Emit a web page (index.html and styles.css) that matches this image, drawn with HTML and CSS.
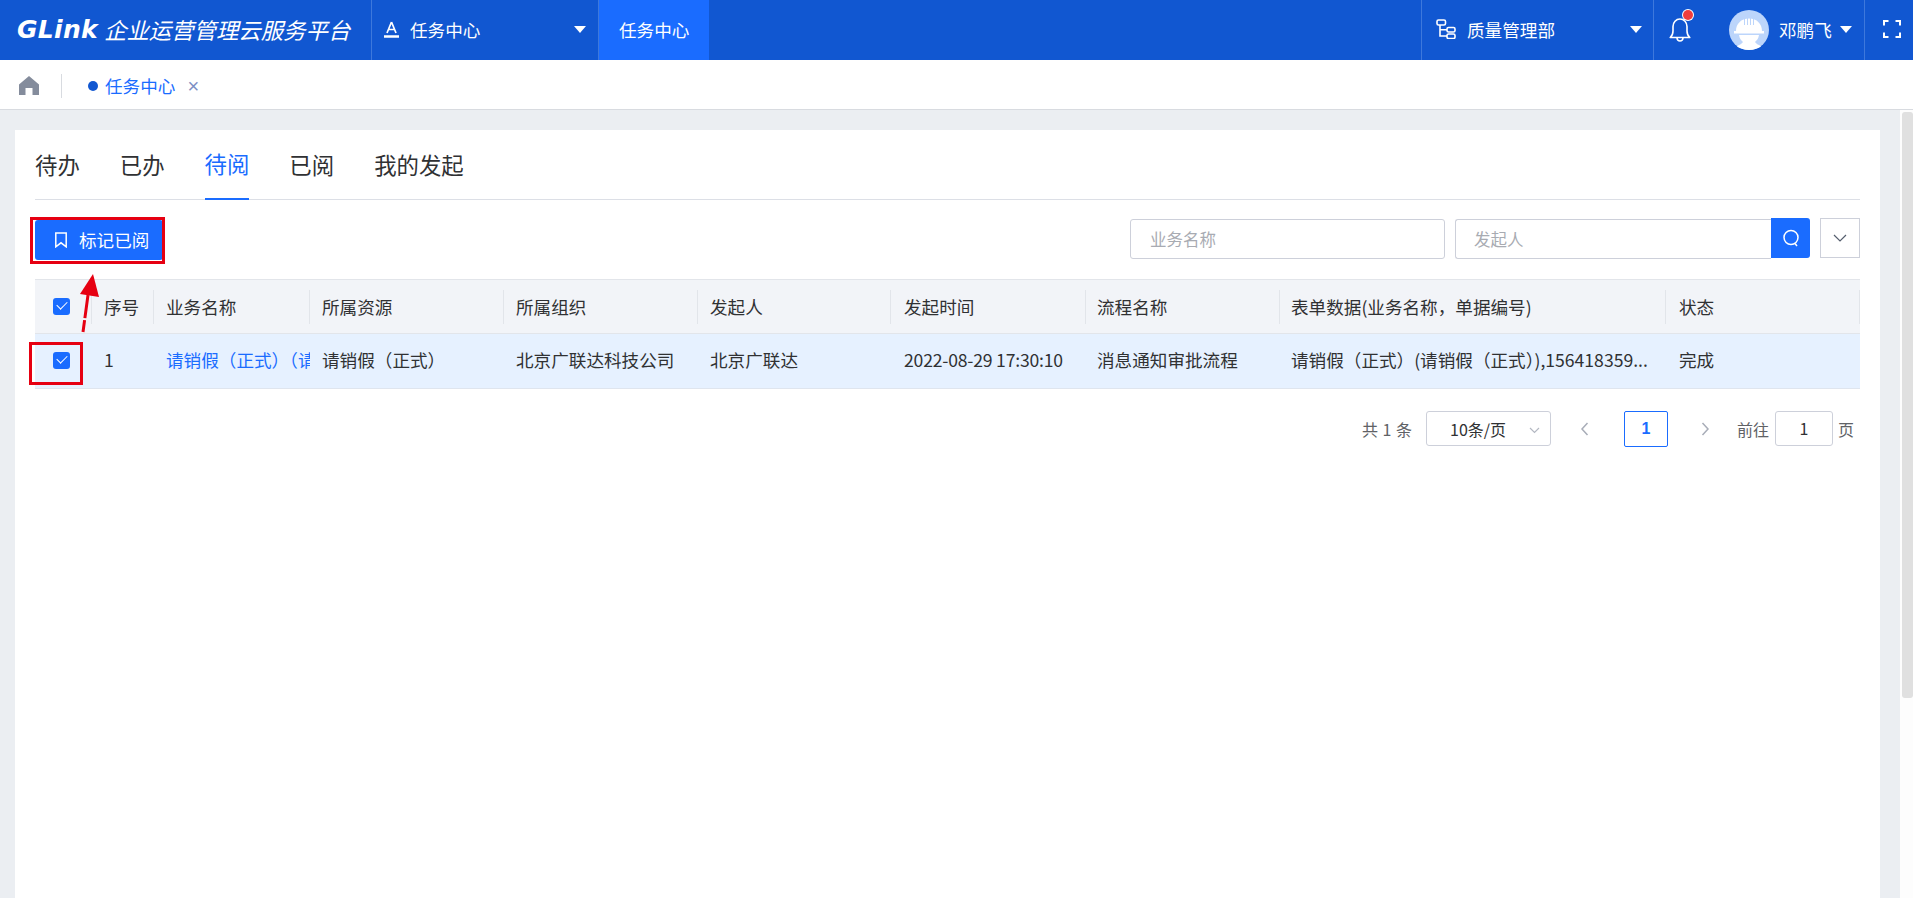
FILE: index.html
```html
<!DOCTYPE html>
<html lang="zh-CN">
<head>
<meta charset="utf-8">
<title>任务中心</title>
<link rel="stylesheet" href="styles.css">
</head>
<body>
<div class="app">
  <header class="topbar">
    <div class="brand"><span class="brand-mark">GLink</span><span class="brand-name">企业运营管理云服务平台</span></div>
    <div class="nav-select">
      <svg class="i-a" width="15" height="17" viewBox="0 0 15 17"><path d="M7.500 1 3 12M7.500 1 12 12M4.500 8.500h6" fill="none" stroke="#fff" stroke-width="1.700"/><path d="M0 15.500h15" stroke="#fff" stroke-width="2.500"/></svg>
      <span class="nav-label">任务中心</span>
      <i class="caret"></i>
    </div>
    <div class="nav-active">任务中心</div>
    <div class="spacer"></div>
    <div class="org">
      <svg width="20" height="20" viewBox="0 0 20 20" fill="none" stroke="#fff" stroke-width="1.600"><rect x="1" y="1" width="8.500" height="5" rx="1.500"/><rect x="11" y="8.500" width="8" height="4.500" rx="1.500"/><rect x="11" y="15" width="8" height="4.500" rx="1.500"/><path d="M4 6v11h7M4 10.700h7"/></svg>
      <span class="org-label">质量管理部</span>
      <i class="caret"></i>
    </div>
    <div class="bell">
      <svg class="bell-icon" width="22" height="24" viewBox="0 3 22 24" fill="none" stroke="#fff" stroke-width="1.600"><path d="M1.200 22.500c2-1.600 2.800-3.600 2.800-6.500v-4.500C4 7.300 7 4 11 4s7 3.300 7 7.500V16c0 2.900.8 4.900 2.800 6.500z" stroke-linejoin="round"/><path d="M8 23c.2 2 1.400 3 3 3s2.800-1 3-3"/></svg>
      <i class="dot"></i>
    </div>
    <div class="user">
      <svg class="avatar" width="40" height="40" viewBox="0 0 40 40"><circle cx="20" cy="20" r="20" fill="#bcd5fb"/><path d="M7 21c0-7 5-12.500 13-12.500S33 14 33 21h2v2.500H5V21z" fill="#fff"/><path d="M10 25h20c-.5 4-3 6-4 7 1.500 2.500 5 3 6 4.500C28.500 38.800 24.500 40 20 40s-8.500-1.200-12-3.500c1-1.500 4.500-2 6-4.500-1-1-3.500-3-4-7z" fill="#fff"/><path d="M15.500 9v6M18.500 8v7M21.500 8v7M24.500 9v6" stroke="#bcd5fb" stroke-width="1"/></svg>
      <span class="user-name">邓鹏飞</span>
      <i class="caret"></i>
    </div>
    <div class="fullscreen">
      <svg width="18" height="18" viewBox="0 0 18 18" fill="none" stroke="#fff" stroke-width="2"><path d="M1 5.500V1h4.500M12.500 1H17v4.500M17 12.500V17h-4.500M5.500 17H1v-4.500"/></svg>
    </div>
  </header>

  <nav class="tagbar">
    <svg class="home" width="20" height="19" viewBox="0 0 20 19"><path d="M10 0 20 8.500V19h-6.500v-7h-7v7H0V8.500z" fill="#848c9c"/></svg>
    <span class="tag-sep"></span>
    <div class="tag"><i class="tag-dot"></i><span class="tag-label">任务中心</span><span class="tag-close">×</span></div>
  </nav>

  <div class="main">
    <section class="card">
      <div class="tabs">
        <span class="tab">待办</span>
        <span class="tab">已办</span>
        <span class="tab tab-on">待阅</span>
        <span class="tab">已阅</span>
        <span class="tab">我的发起</span>
      </div>

      <div class="toolbar">
        <button class="mark-btn">
          <svg width="14" height="16" viewBox="0 0 14 16" fill="none" stroke="#fff" stroke-width="1.500"><path d="M1.800 1h10.400v13.800L7 10.800l-5.200 4z"/></svg>
          <span class="mark-label">标记已阅</span>
        </button>
        <div class="search">
          <div class="field field-a">业务名称</div>
          <div class="field-group">
            <div class="field field-b">发起人</div>
            <div class="search-btn"><svg width="18" height="19" viewBox="0 0 18 19" fill="none" stroke="#fff" stroke-width="1.500"><circle cx="9" cy="8.500" r="7"/><path d="M13 14.500l2 2.500"/></svg></div>
          </div>
          <div class="more"><svg width="14" height="8" viewBox="0 0 14 8" fill="none" stroke="#555e6e" stroke-width="1.200"><path d="M1 1l6 6 6-6"/></svg></div>
        </div>
      </div>

      <div class="table">
        <div class="row head">
          <div class="cell c-check"><i class="check"></i></div>
          <div class="cell c-no"><span>序号</span></div>
          <div class="cell c-biz"><span>业务名称</span></div>
          <div class="cell c-res"><span>所属资源</span></div>
          <div class="cell c-org"><span>所属组织</span></div>
          <div class="cell c-user"><span>发起人</span></div>
          <div class="cell c-time"><span>发起时间</span></div>
          <div class="cell c-flow"><span>流程名称</span></div>
          <div class="cell c-form"><span>表单数据(业务名称，单据编号)</span></div>
          <div class="cell c-state"><span>状态</span></div>
        </div>
        <div class="row body">
          <div class="cell c-check"><i class="check"></i></div>
          <div class="cell c-no"><span>1</span></div>
          <div class="cell c-biz"><span class="link">请销假（正式）（请销假（正式））</span></div>
          <div class="cell c-res"><span>请销假（正式）</span></div>
          <div class="cell c-org"><span>北京广联达科技公司</span></div>
          <div class="cell c-user"><span>北京广联达</span></div>
          <div class="cell c-time"><span class="date">2022-08-29 17:30:10</span></div>
          <div class="cell c-flow"><span>消息通知审批流程</span></div>
          <div class="cell c-form"><span>请销假（正式）(请销假（正式）),156418359...</span></div>
          <div class="cell c-state"><span>完成</span></div>
        </div>
      </div>

      <div class="pager">
        <span class="total">共 1 条</span>
        <div class="size">10条/页<svg width="11" height="7" viewBox="0 0 11 7" fill="none" stroke="#b4b8c2" stroke-width="1.200"><path d="M1 1l4.500 4.500L10 1"/></svg></div>
        <svg class="pg-arrow pg-prev" width="9" height="14" viewBox="0 0 9 14" fill="none" stroke="#a8adb8" stroke-width="1.500"><path d="M7.500 1 2 7l5.500 6"/></svg>
        <span class="page-on">1</span>
        <svg class="pg-arrow pg-next" width="9" height="14" viewBox="0 0 9 14" fill="none" stroke="#a8adb8" stroke-width="1.500"><path d="M1.500 1 7 7l-5.500 6"/></svg>
        <span class="goto">前往</span>
        <span class="page-input">1</span>
        <span class="goto-end">页</span>
      </div>
    </section>
    <div class="scrollbar"><div class="thumb"></div></div>
  </div>
</div>

<div class="mark mark-btnbox"></div>
<div class="mark mark-checkbox"></div>
<svg class="mark-arrow" width="24" height="62" viewBox="0 0 24 62"><path d="M3 60 8 23" stroke="#e60012" stroke-width="3" stroke-dasharray="12 2 30" fill="none"/><path d="M13 2 19 25 0 22z" fill="#e60012"/></svg>
</body>
</html>
```
FILE: styles.css
```css
* { box-sizing: border-box; }
html, body { margin: 0; padding: 0; height: 100%; overflow: hidden; }
body {
  font-family: "Noto Sans CJK SC", "Liberation Sans", sans-serif;
  font-size: 17.6px;
  color: #303133;
  background: #ebeef2;
}
i { display: block; font-style: normal; }
.app { height: 898px; display: flex; flex-direction: column; }

.topbar { height: 60px; background: #1157d1; color: #fff; display: flex; align-items: stretch; flex: none; }
.topbar > div { display: flex; align-items: center; padding-bottom: 2px; }
.caret { width: 0; height: 0; border-left: 6px solid transparent; border-right: 6px solid transparent; border-top: 7px solid #fff; }
.brand { width: 371px; padding-left: 17px; }
.brand-mark { font-family: "DejaVu Sans", sans-serif; font-weight: 700; font-style: italic; font-size: 25px; letter-spacing: 0.3px; width: 87px; line-height: 1; }
.brand-name { font-size: 22.4px; font-style: italic; white-space: nowrap; }
.nav-select { width: 227px; border-left: 1px solid #3d78dc; padding-left: 12px; }
.nav-label { margin-left: 11px; width: 164px; }
.nav-active { width: 111px; background: #1a6cff; border-left: 1px solid #3d78dc; padding-left: 20px; }
.spacer { flex: 1; }
.org { width: 232px; border-left: 1px solid #3d78dc; padding-left: 14px; }
.org-label { margin-left: 11px; width: 163px; }
.bell { width: 76px; border-left: 1px solid #3d78dc; padding-left: 15px; position: relative; }
.bell-icon { margin-top: 2px; }
.dot { position: absolute; left: 29px; top: 10px; width: 10px; height: 10px; border-radius: 50%; background: #f03d3d; box-shadow: 0 0 0 1px #fff; }
.user { width: 135px; }
.avatar { margin-top: 2px; }
.user-name { margin-left: 10px; width: 61px; white-space: nowrap; }
.fullscreen { width: 49px; border-left: 1px solid #3d78dc; padding-left: 18px; }

.tagbar { height: 50px; background: #fff; border-bottom: 1px solid #d8dbe0; display: flex; align-items: center; padding-left: 19px; flex: none; }
.home { margin-top: 2px; }
.tag-sep { width: 1px; height: 24px; background: #d8dbe0; margin-left: 22px; margin-top: 2px; }
.tag { display: flex; align-items: center; margin-left: 26px; color: #1a6cff; margin-top: 2px; }
.tag-dot { width: 10px; height: 10px; border-radius: 50%; background: #1157d1; }
.tag-label { margin-left: 7px; }
.tag-close { margin-left: 12px; color: #7d8fc4; font-size: 20px; line-height: 1; font-family: "Liberation Sans", sans-serif; }

.main { flex: 1; display: flex; min-height: 0; padding: 20px 0 0 15px; }
.card { width: 1865px; background: #fff; padding: 0 20px; }
.scrollbar { width: 13px; margin-left: 20px; margin-top: -20px; background: #fdfdfd; padding: 2px 0 0 2px; }
.thumb { height: 586px; background: #e0e0e0; border-radius: 3px; }

.tabs { height: 70px; border-bottom: 1px solid #dcdfe6; display: flex; align-items: stretch; }
.tab { font-size: 22.4px; display: flex; align-items: center; margin-right: 40px; height: 70px; padding-bottom: 2px; white-space: nowrap; }
.tab-on { color: #1a6cff; border-bottom: 2px solid #1a6cff; }

.toolbar { display: flex; justify-content: space-between; align-items: flex-start; padding-top: 18px; height: 79px; }
.mark-btn { width: 128px; height: 40px; margin-top: 2px; background: #1a6cff; color: #fff; border: 0; border-radius: 3px; font: inherit; display: flex; align-items: center; padding: 0 0 0 19px; gap: 11px; }
.mark-label { margin-top: -2px; }
.search { display: flex; gap: 10px; }
.field { height: 40px; margin-top: 1px; border: 1px solid #cdd0da; border-radius: 3px; color: #a8abb2; font-size: 16.5px; line-height: 38px; padding-left: 18px; background: #fff; }
.field-a { width: 315px; padding-left: 19px; }
.field-group { display: flex; }
.field-b { width: 316px; border-right: 0; border-radius: 3px 0 0 3px; }
.search-btn { width: 39px; height: 40px; background: #1a6cff; border-radius: 0 3px 3px 0; display: flex; align-items: center; justify-content: center; }
.more { width: 40px; height: 40px; border: 1px solid #cdd0da; display: flex; align-items: center; justify-content: center; }

.table { border-top: 1px solid #e2e5ea; }
.row { display: flex; width: 1825px; }
.head { height: 54px; background: #f2f4f8; border-bottom: 1px solid #e2e5ea; }
.body { height: 55px; background: #e6f1ff; border-bottom: 1px solid #dfe5ee; }
.cell { display: flex; align-items: center; padding-left: 12px; position: relative; white-space: nowrap; overflow: hidden; }
.body .cell { padding-bottom: 4px; }
.head .cell::after { content: ""; position: absolute; right: 0; top: 10px; bottom: 9px; width: 1px; background: #e2e5ea; }
.c-check { width: 57px; padding-left: 18px; }
.c-no { width: 62px; }
.c-biz { width: 156px; }
.c-res { width: 194px; }
.c-org { width: 194px; }
.c-user { width: 193px; }
.c-time { width: 195px; padding-left: 13px; }
.c-flow { width: 194px; padding-left: 11px; }
.c-form { width: 386px; padding-left: 11px; }
.c-state { width: 194px; padding-left: 13px; }
.link { color: #1a6cff; }
.date { letter-spacing: -0.2px; }
.check { width: 17px; height: 17px; border-radius: 3px; background: #1a6cff; position: relative; }
.body .check { margin-top: 2px; }
.check::after { content: ""; position: absolute; left: 4px; top: 3px; width: 9px; height: 5px; border-left: 1.500px solid #fff; border-bottom: 1.500px solid #fff; transform: rotate(-45deg); }

.pager { display: flex; align-items: center; height: 35px; margin-top: 22px; padding-left: 1327px; font-size: 16px; color: #606266; white-space: nowrap; }
.total { width: 64px; word-spacing: 1px; }
.size { width: 125px; height: 35px; border: 1px solid #cdd0da; border-radius: 3px; color: #303133; padding-left: 23px; display: flex; align-items: center; position: relative; }
.size svg { position: absolute; right: 10px; top: 15px; }
.pg-arrow { flex: none; }
.pg-prev { margin-left: 29px; }
.page-on { width: 44px; height: 36px; border: 1px solid #1a6cff; border-radius: 2px; color: #1a6cff; font-weight: 700; font-family: "Liberation Sans", sans-serif; text-align: center; line-height: 34px; margin-left: 35px; }
.pg-next { margin-left: 33px; }
.goto { margin-left: 27px; width: 38px; }
.page-input { width: 58px; height: 35px; border: 1px solid #cdd0da; border-radius: 3px; color: #303133; text-align: center; line-height: 33px; }
.goto-end { margin-left: 5px; }

.mark { position: absolute; border: 3px solid #e60012; }
.mark-btnbox { left: 30px; top: 217px; width: 135px; height: 47px; }
.mark-checkbox { left: 29px; top: 342px; width: 54px; height: 43px; }
.mark-arrow { position: absolute; left: 80px; top: 272px; }
```
